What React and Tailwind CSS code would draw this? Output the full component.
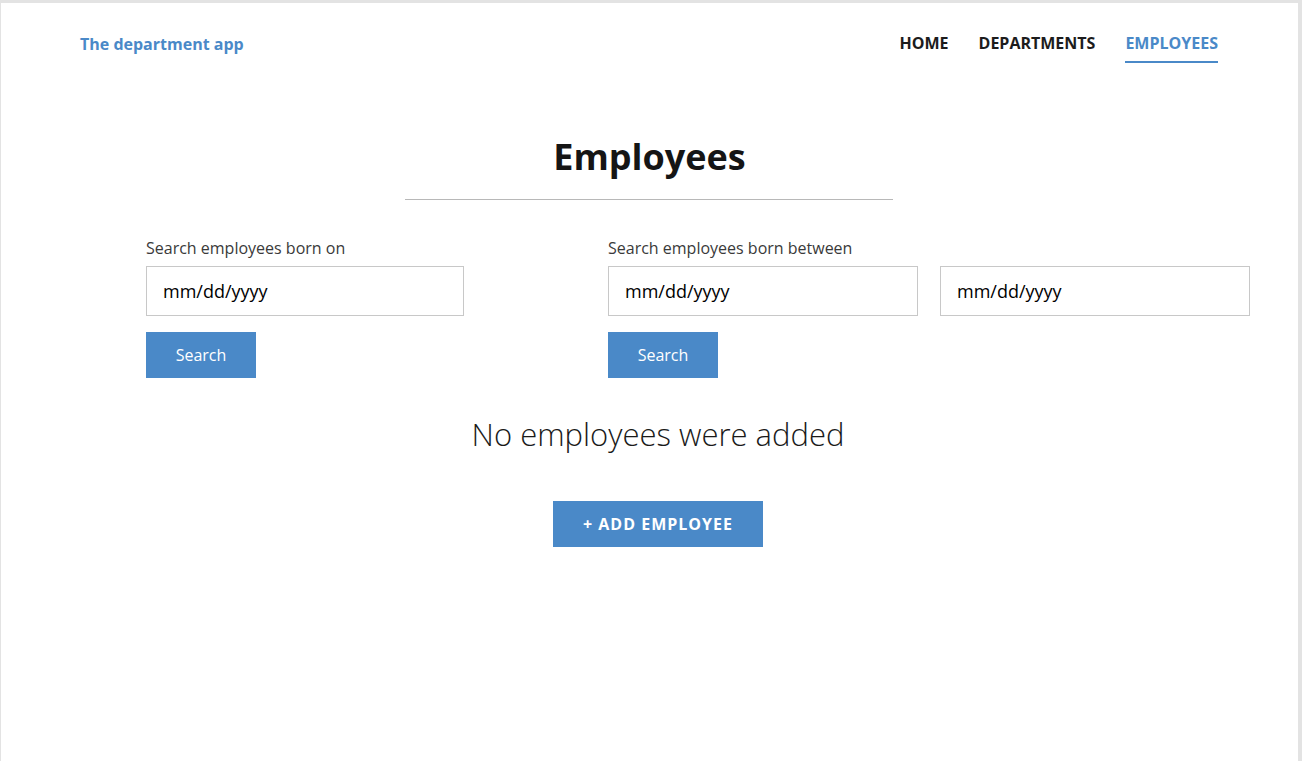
import React from 'react'

const FONT = { fontFamily: '"Open Sans", "Noto Sans", sans-serif' }

const NavItem = ({ active, children }) => (
  <a
    href="#"
    className={
      active
        ? 'pb-[6px] border-b-2 border-[#4a89c8] text-[#4a89c8] font-bold uppercase text-base leading-6'
        : 'pb-[6px] border-b-2 border-transparent text-[#1c1c1c] font-bold uppercase text-base leading-6'
    }
  >
    {children}
  </a>
)

const DateBox = ({ className }) => (
  <div className={'h-[50px] border border-[#c8c8c8] bg-white flex items-center px-4 text-[18px] text-black ' + className}>
    mm/dd/yyyy
  </div>
)

const SearchButton = () => (
  <button className="mt-4 w-[110px] h-[46px] bg-[#4a89c8] text-white text-base">Search</button>
)

export default function App() {
  return (
    <div className="min-h-screen bg-[#e3e3e3] pt-[3px] pl-[1px] pr-[4px]" style={FONT}>
      <div className="bg-white h-[758px]">
        <header className="flex items-start justify-between pt-[28px] pl-[79px] pr-[80px]">
          <a href="#" className="mt-[1px] text-base leading-6 font-bold text-[#4a89c8]">The department app</a>
          <nav className="flex gap-[30px]">
            <NavItem>Home</NavItem>
            <NavItem>Departments</NavItem>
            <NavItem active>Employees</NavItem>
          </nav>
        </header>

        <h1 className="mt-[70px] text-center text-[36px] leading-[48px] font-bold text-[#151515]">Employees</h1>
        <div className="mt-[18px] ml-[404px] w-[488px] h-px bg-[#b8b8b8]" />

        <div className="mt-[36px] pl-[145px] flex">
          <div className="w-[462px]">
            <div className="text-base leading-6 text-[#3a3a3a] mb-[6px]">Search employees born on</div>
            <DateBox className="w-[318px]" />
            <SearchButton />
          </div>
          <div>
            <div className="text-base leading-6 text-[#3a3a3a] mb-[6px]">Search employees born between</div>
            <div className="flex gap-[22px]">
              <DateBox className="w-[310px]" />
              <DateBox className="w-[310px]" />
            </div>
            <SearchButton />
          </div>
        </div>

        <div className="pl-[17px] flex flex-col items-center">
          <p className="mt-[36px] text-[31px] leading-[40px] font-light text-[#1a1a1a]">No employees were added</p>
          <button className="mt-[47px] w-[210px] h-[46px] bg-[#4a89c8] text-white font-bold uppercase tracking-[1px] text-base">
            + Add employee
          </button>
        </div>
      </div>
    </div>
  )
}
